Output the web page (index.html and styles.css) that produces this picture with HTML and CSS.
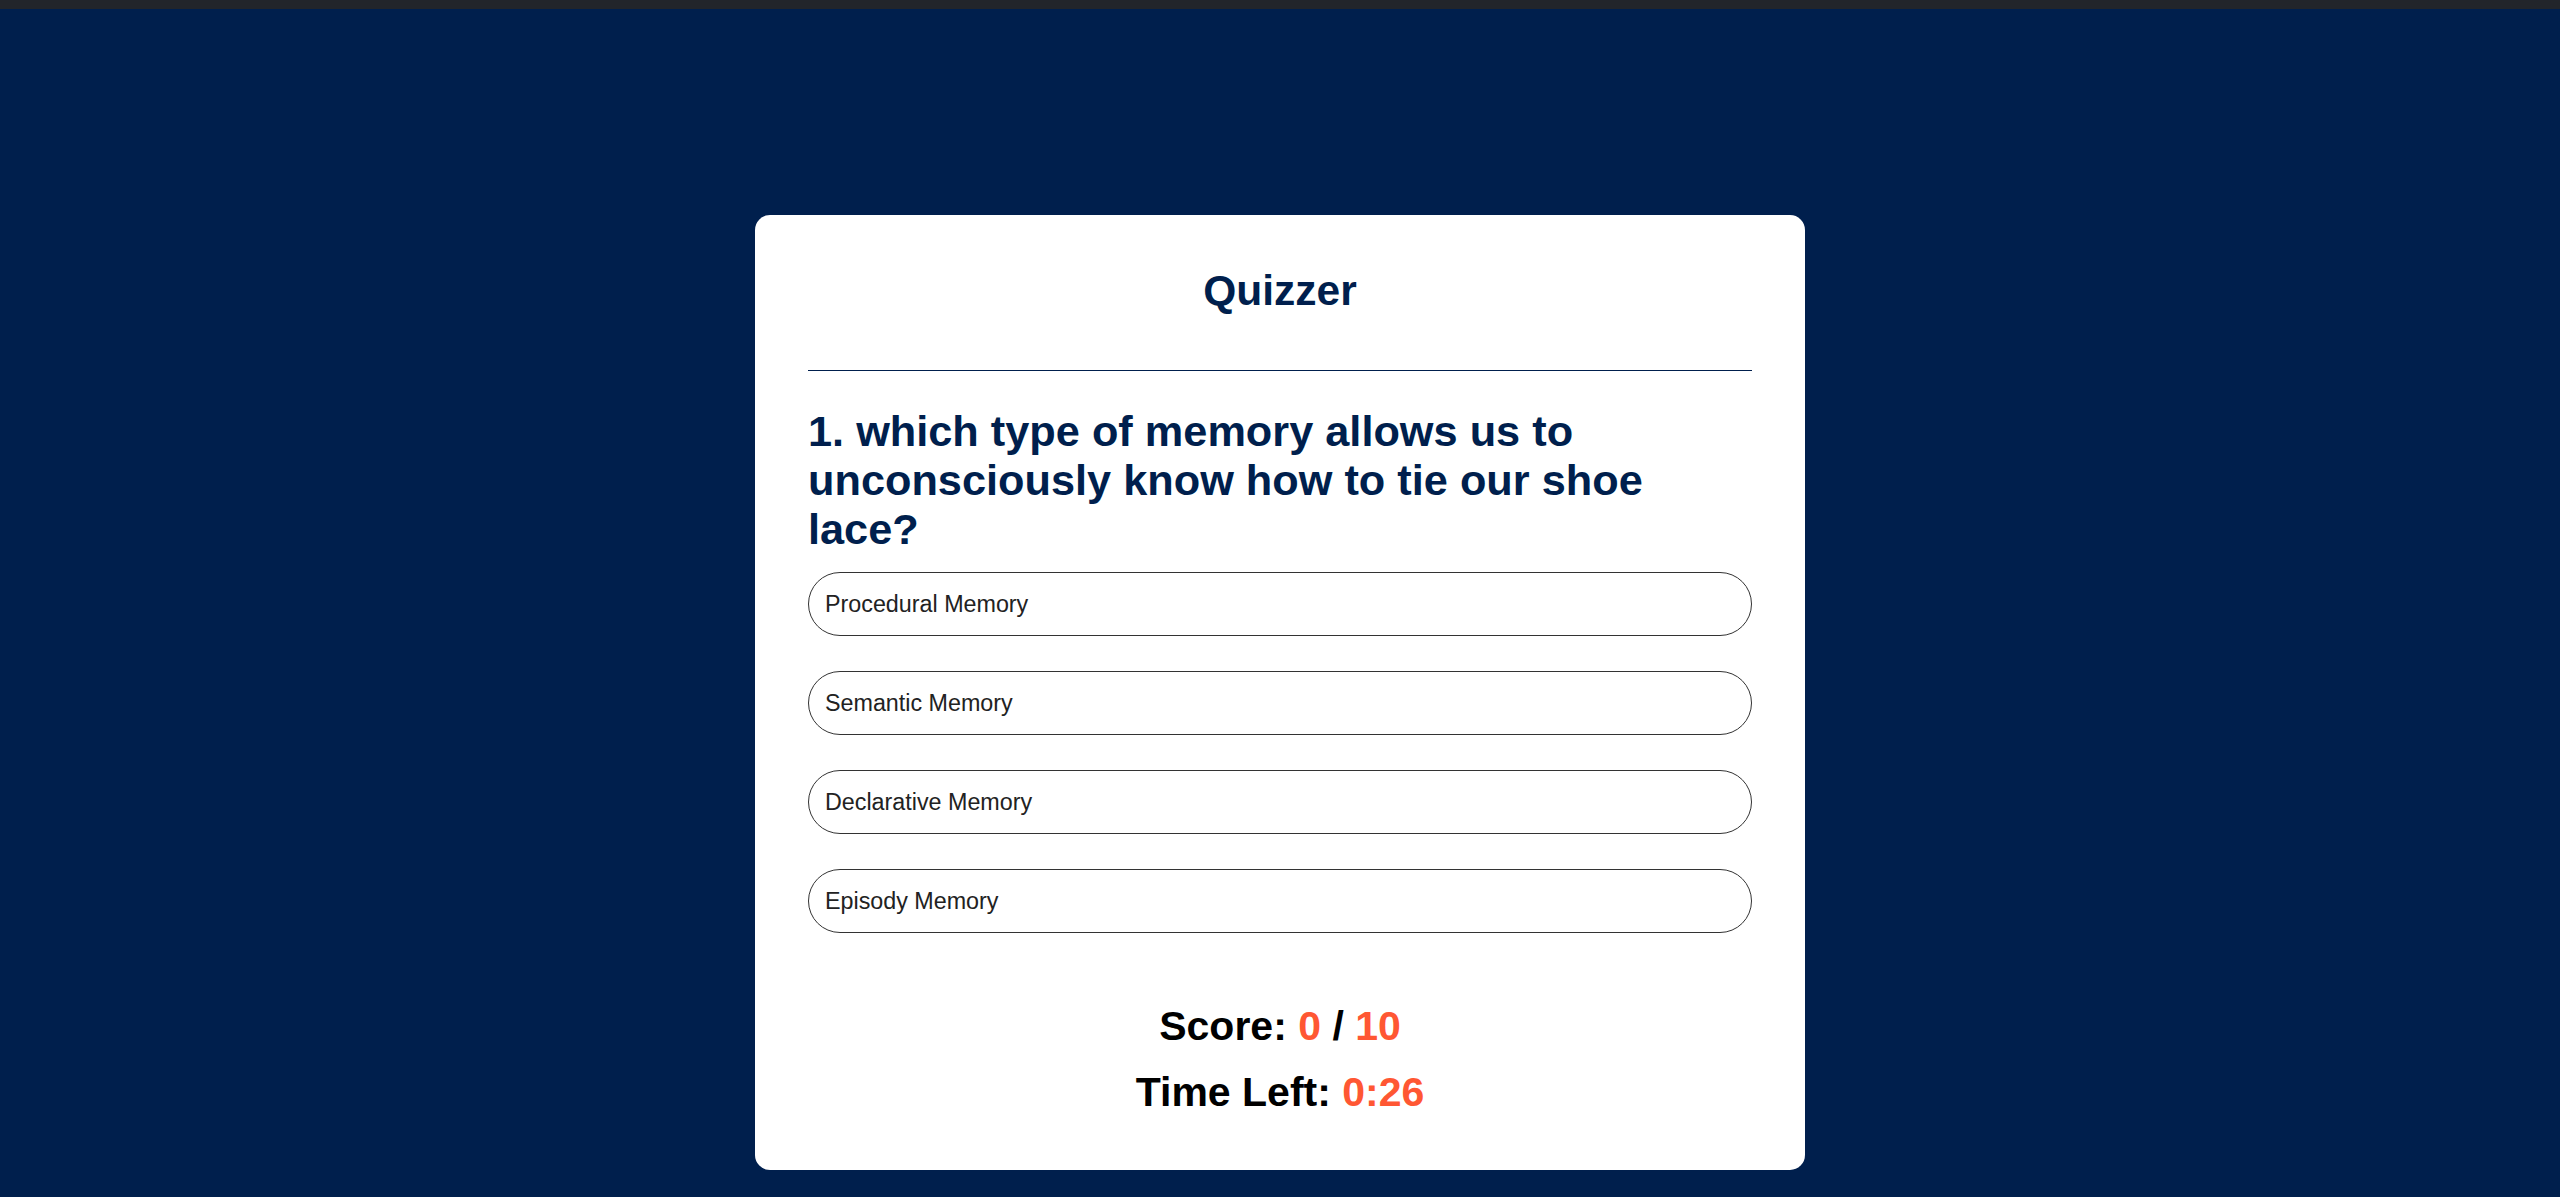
FILE: index.html
```html
<!DOCTYPE html>
<html lang="en">
<head>
<meta charset="utf-8">
<title>Quizzer</title>
<link rel="stylesheet" href="styles.css">
</head>
<body>
<div class="topbar"></div>
<main class="page">
  <section class="card">
    <h1 class="title">Quizzer</h1>
    <hr class="divider">
    <h2 class="question">1. which type of memory allows us to unconsciously know how to tie our shoe lace?</h2>
    <ul class="options">
      <li class="option">Procedural Memory</li>
      <li class="option">Semantic Memory</li>
      <li class="option">Declarative Memory</li>
      <li class="option">Episody Memory</li>
    </ul>
    <div class="stats">
      <p class="stat">Score: <span class="accent">0</span> / <span class="accent">10</span></p>
      <p class="stat">Time Left: <span class="accent">0:26</span></p>
    </div>
  </section>
</main>
</body>
</html>
```

FILE: styles.css
```css
* {
  box-sizing: border-box;
}

html, body {
  margin: 0;
  padding: 0;
}

body {
  background: #001f4d;
  font-family: "Liberation Sans", Arial, sans-serif;
  min-height: 1197px;
}

.topbar {
  height: 9px;
  background: #22252b;
}

.page {
  display: flex;
  justify-content: center;
  padding-top: 206px;
}

.card {
  width: 1050px;
  background: #ffffff;
  border-radius: 15px;
  padding: 52px 53px 54px 53px;
  display: flex;
  flex-direction: column;
}

.title {
  margin: 0;
  text-align: center;
  font-size: 42.5px;
  line-height: normal;
  font-weight: 700;
  color: #001f4d;
}

.divider {
  margin: 55px 0 0 0;
  border: 0;
  border-top: 1px solid #001f4d;
  height: 0;
}

.question {
  margin: 36px 0 0 0;
  font-size: 43.3px;
  line-height: normal;
  font-weight: 700;
  color: #001f4d;
}

.options {
  list-style: none;
  margin: 18px 0 0 0;
  padding: 0;
  display: flex;
  flex-direction: column;
  gap: 35px;
}

.option {
  height: 64px;
  border: 1px solid #333333;
  border-radius: 32px;
  padding: 0 16px;
  display: flex;
  align-items: center;
  font-size: 23.3px;
  color: #222222;
}

.stats {
  margin-top: 70px;
  display: flex;
  flex-direction: column;
  gap: 19px;
  align-items: center;
}

.stat {
  margin: 0;
  font-size: 41px;
  line-height: normal;
  font-weight: 700;
  color: #000000;
}

.accent {
  color: #ff5733;
}
```
